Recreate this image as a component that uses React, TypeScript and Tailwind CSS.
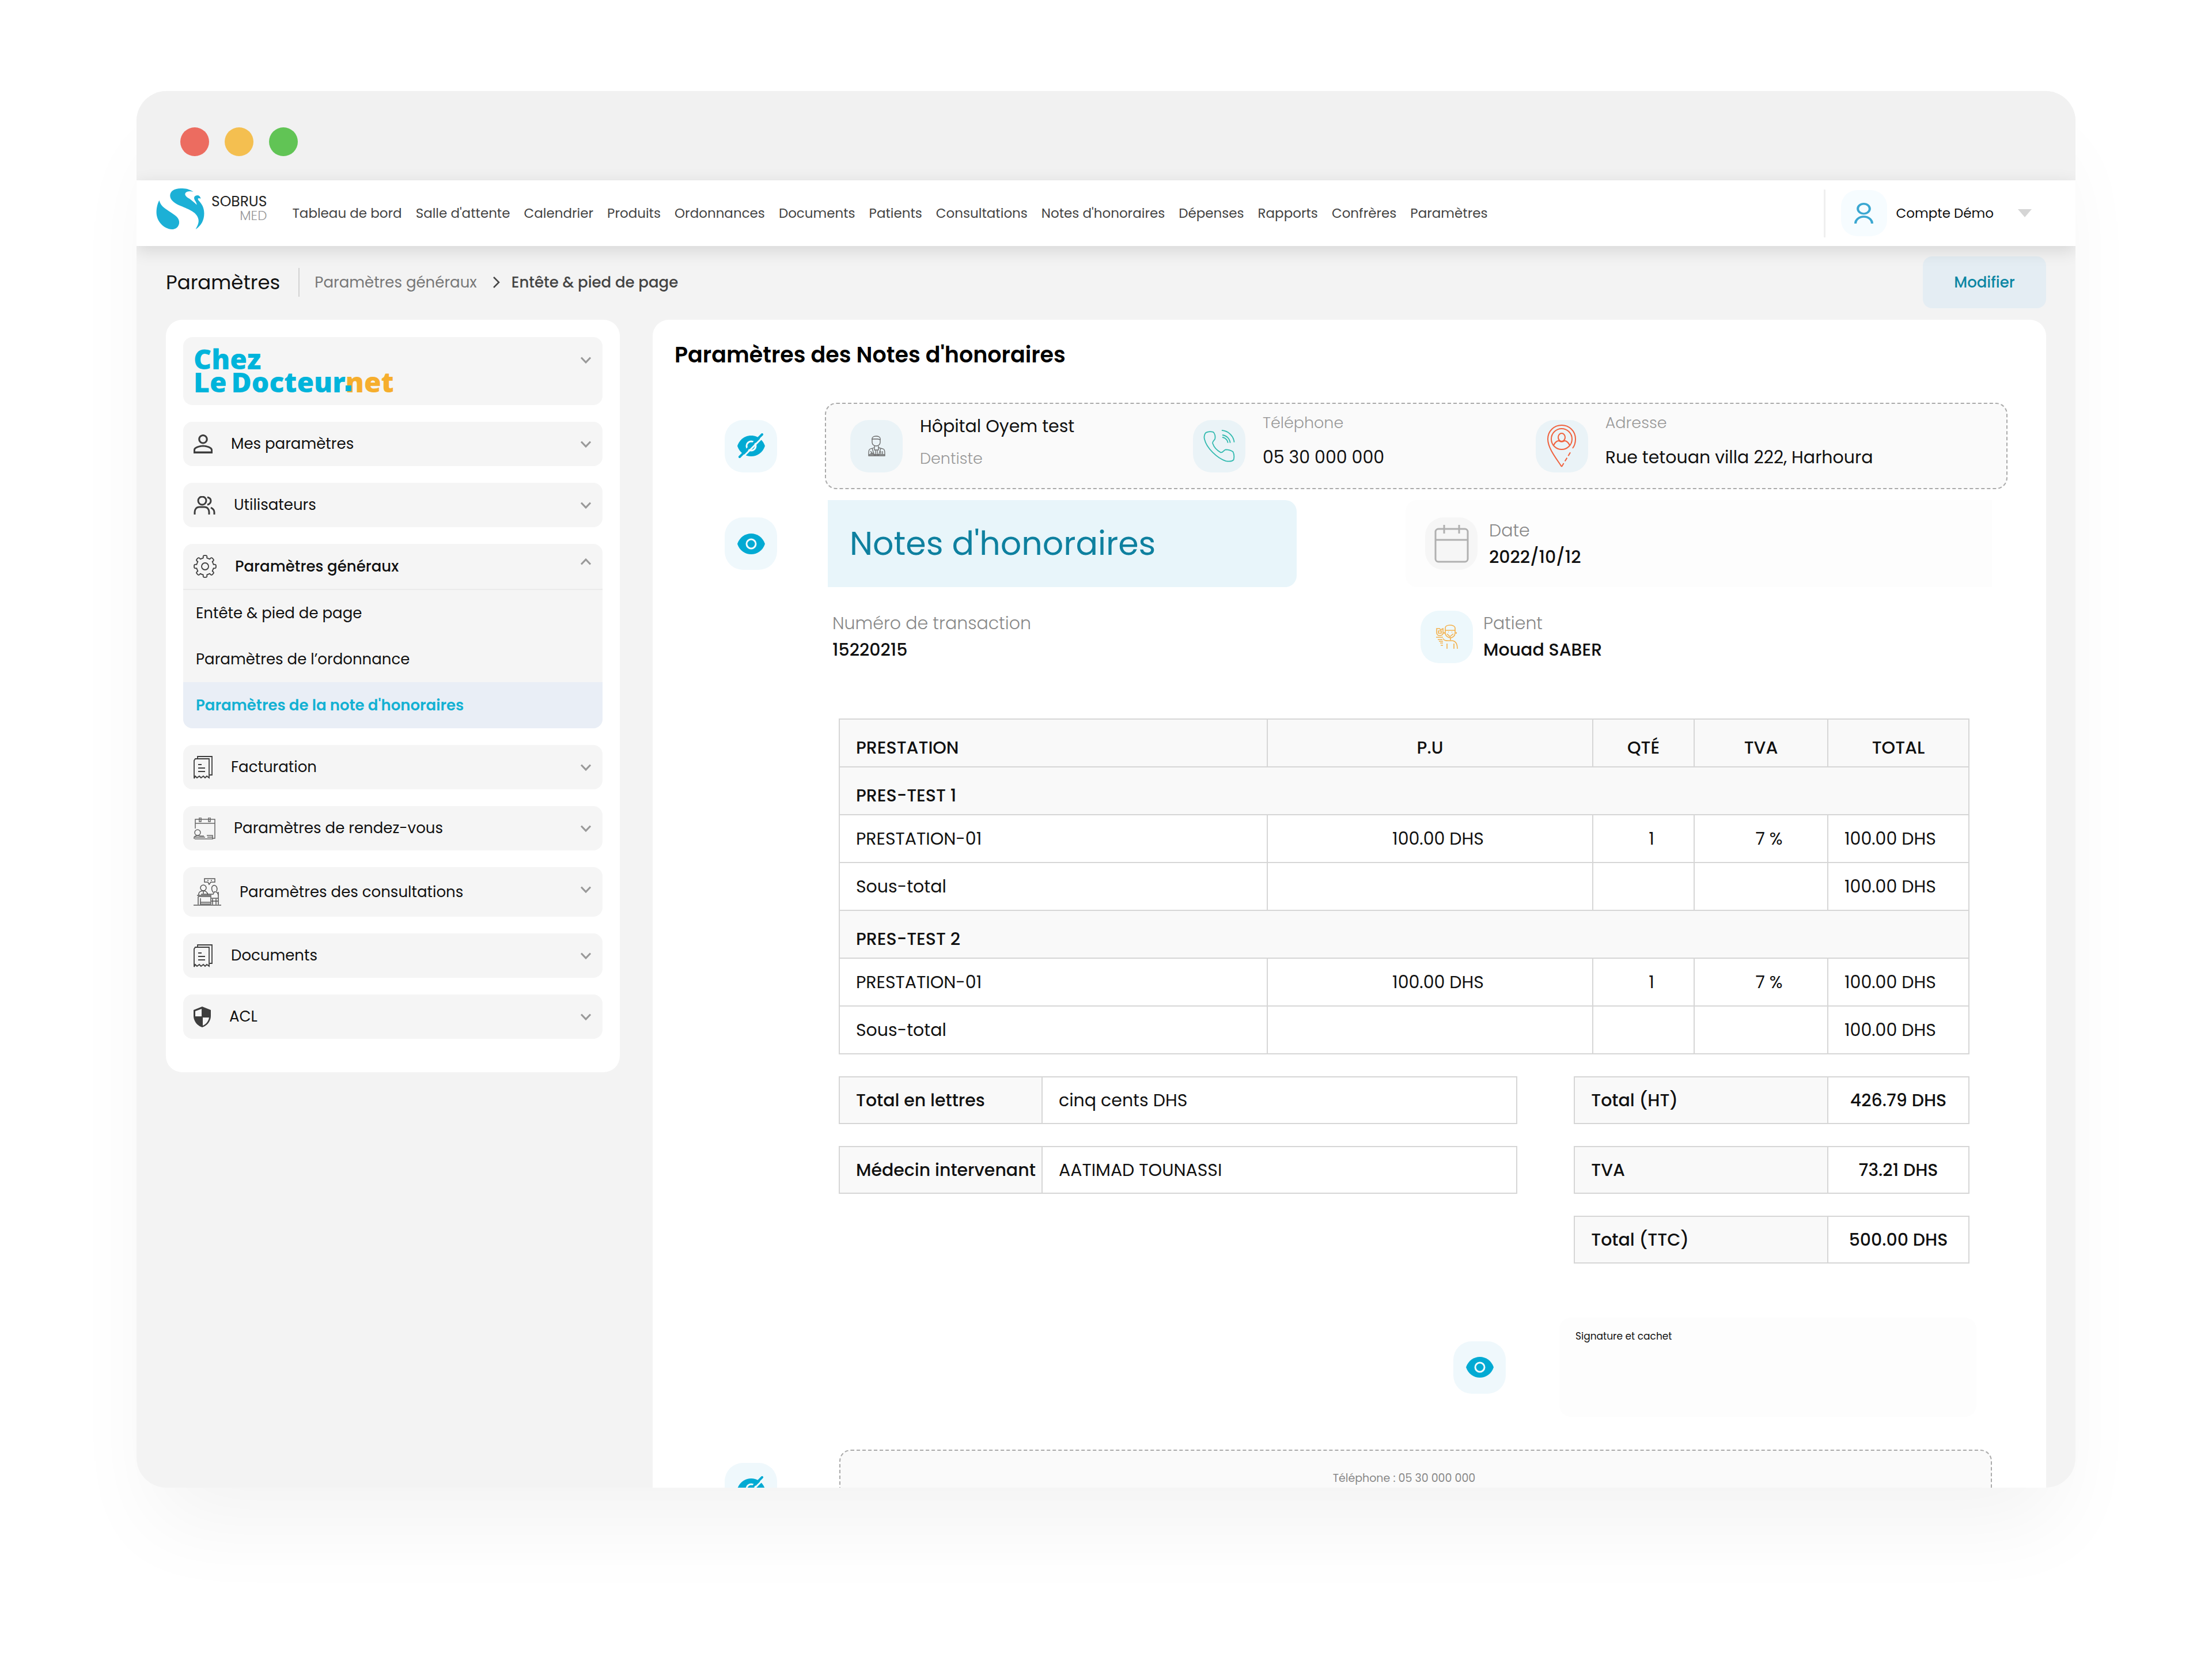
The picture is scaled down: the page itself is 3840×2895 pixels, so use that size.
import { ReactNode } from 'react';

const NAV_LINKS = [
  'Tableau de bord',
  "Salle d'attente",
  'Calendrier',
  'Produits',
  'Ordonnances',
  'Documents',
  'Patients',
  'Consultations',
  "Notes d'honoraires",
  'Dépenses',
  'Rapports',
  'Confrères',
  'Paramètres',
];

const GROUPS = [
  { name: 'PRES-TEST 1', line: 'PRESTATION-01', price: '100.00 DHS', qty: '1', vat: '7 %', total: '100.00 DHS' },
  { name: 'PRES-TEST 2', line: 'PRESTATION-01', price: '100.00 DHS', qty: '1', vat: '7 %', total: '100.00 DHS' },
];

const DETAILS = [
  { label: 'Total en lettres', value: 'cinq cents DHS' },
  { label: 'Médecin intervenant', value: 'AATIMAD TOUNASSI' },
];

const TOTALS = [
  { label: 'Total (HT)', value: '426.79 DHS' },
  { label: 'TVA', value: '73.21 DHS' },
  { label: 'Total (TTC)', value: '500.00 DHS' },
];

/* ---------- Icons ---------- */

function SwanLogo() {
  return (
    <svg className="h-[71px] w-[84px] shrink-0" viewBox="0 0 84 72" fill="#1cb0d6" aria-hidden="true">
      <path d="M65 6C58 1 51 0 43 0C31 0 24 5 24 13C24 21 33 27 43 31C57 37 72 42 74 55C75 61 72 66 69 72C79 65 84 56 84 44C84 34 80 27 74 21C72 18 73 16 78 18C77 13 73 11 69 13C65 15 66 19 69 23C70 25 71 27 71 29C66 24 62 21 58 18C53 15 49 12 51 8C53 5 59 4 65 6Z" />
      <path d="M5 21C7 30 13 34 22 40C33 47 41 52 40 61C39 68 34 72 27 72C13 71 0 58 0 42C0 34 2 26 5 21Z" />
    </svg>
  );
}

function Chevron({ up = false }: { up?: boolean }) {
  return (
    <svg
      className={up ? 'h-3 w-[18px] rotate-180' : 'h-3 w-[18px]'}
      viewBox="0 0 18 12"
      fill="none"
      stroke="#999"
      strokeWidth="3"
      aria-hidden="true"
    >
      <path d="M1 1.5 9 10 17 1.5" />
    </svg>
  );
}

function ProfileIcon() {
  return (
    <svg className="h-[33px] w-[33px]" viewBox="4 4 16 16" fill="#3d3d3d" aria-hidden="true">
      <path d="M12 5.5A2.5 2.5 0 1 1 12 10.500A2.500 2.500 0 0 1 12 5.500M12 14.400C15 14.400 18.500 15.600 18.600 17.200V18.300H5.400V17.200C5.500 15.600 9 14.400 12 14.400M12 4C9.800 4 8 5.800 8 8s1.800 4 4 4 4-1.800 4-4-1.800-4-4-4zm0 9c-2.700 0-8 1.300-8 4v3h16v-3c0-2.700-5.300-4-8-4z" fillRule="evenodd" />
    </svg>
  );
}

function UsersIcon() {
  return (
    <svg className="h-8 w-[38px]" viewBox="0 0 38 32" fill="none" stroke="#3d3d3d" strokeWidth="3" aria-hidden="true">
      <ellipse cx="15" cy="8" rx="7" ry="7" />
      <path d="M2 32v-4c0-5 3-9 8-9h9c5 0 8 4 8 9v4" />
      <path d="M24 2c4 1 6 3 6 6s-2 6-6 7M30 20c4 2 6 5 6 8v4" />
    </svg>
  );
}

const point = (radius: number, degrees: number) => {
  const angle = (degrees * Math.PI) / 180;
  return `${20 + radius * Math.cos(angle)} ${20 + radius * Math.sin(angle)}`;
};

const GEAR_PATH = [0, 45, 90, 135, 180, 225, 270, 315]
  .map(
    (a, i) =>
      `${i === 0 ? 'M' : 'L'}${point(15, a - 12)} Q${point(19, a - 12)} ${point(19, a - 5)} L${point(19, a + 5)} Q${point(19, a + 12)} ${point(15, a + 12)} Q${point(15, a + 22)} ${point(15, a + 33)}`,
  )
  .join(' ');

function GearIcon() {
  return (
    <svg className="h-10 w-10" viewBox="0 0 40 40" fill="none" stroke="#3d3d3d" strokeWidth="1.800" strokeLinejoin="round" aria-hidden="true">
      <path d={`${GEAR_PATH}Z`} />
      <circle cx="20" cy="20" r="6" />
    </svg>
  );
}

function ReceiptIcon() {
  return (
    <svg className="h-10 w-[33px]" viewBox="0 0 33 40" fill="none" stroke="#3d3d3d" strokeWidth="1.800" aria-hidden="true">
      <path d="M7 5V1h25v32h-4" />
      <path d="M1 39V8l2-3h24v33l-4-3-3 3-3-3-4 3-3-3-4 3-3-3Z" />
      <path d="M8 15h6M8 21h12M8 27h12" />
    </svg>
  );
}

function AppointmentIcon() {
  return (
    <svg className="h-[38px] w-[38px]" viewBox="0 0 38 38" fill="none" stroke="#666" strokeWidth="1.500" aria-hidden="true">
      <path d="M3 19V3h34v33h-4M3 10h34M10 0v7h3V0zM26 0v7h3V0z" />
      <circle cx="7" cy="26" r="5" />
      <path d="M1 37v-3q3-4 11-2h6M23 31h10v6M2 37h32M2 34h18M24 34h9" />
    </svg>
  );
}

function ConsultationIcon() {
  return (
    <svg className="h-12 w-12" viewBox="0 0 48 48" fill="none" stroke="#555" strokeWidth="1.500" aria-hidden="true">
      <path d="M19 1h18v6h-7l-3 4-2-4h-6ZM24 4h2M30 4h2" />
      <path d="M0 47h48M8 32h22v14M8 32v14M12 35v11M12 42h17M12 45h17M6 30h25" />
      <circle cx="17" cy="17" r="5" />
      <path d="M9 30c-1-6 4-8 8-8s7 3 8 7M17 22v5M13 28h14" />
      <path d="M32 21c-2-8 4-10 7-7s2 6 1 9M32 21l2 4M27 28h7l2-4c4-1 7 2 7 7v4H31M43 24v22M33 36v10M39 36v10M31 40h12" />
    </svg>
  );
}

function ShieldIcon() {
  return (
    <svg className="h-9 w-[30px]" viewBox="0 0 30 36" fill="#3d3d3d" aria-hidden="true">
      <path d="M15 0 30 6v10c0 9-6 17-15 20C6 33 0 25 0 16V6Z" />
      <path d="M14 4v13H3V8ZM16 19h11c-1 6-5 12-11 14Z" fill="#f5f5f5" />
    </svg>
  );
}

function EyeIcon({ off = false }: { off?: boolean }) {
  return (
    <svg className="h-11 w-12" viewBox="0 0 48 44" fill="none" aria-hidden="true">
      <path d="M0 22C4 10 14 4 24 4s20 6 24 18C44 34 34 40 24 40S4 34 0 22Z" fill="#02aad3" />
      <circle cx="24" cy="22" r="8" stroke="#f1fafc" strokeWidth="3" />
      {off && (
        <>
          <path d="M8 43 47 4" stroke="#f1fafc" strokeWidth="3" />
          <path d="M4 41 43 2" stroke="#02aad3" strokeWidth="4" strokeLinecap="round" />
        </>
      )}
    </svg>
  );
}

function DoctorIcon() {
  return (
    <svg className="h-9 w-[30px]" viewBox="0 0 30 36" fill="none" stroke="#666" strokeWidth="1.300" aria-hidden="true">
      <path d="M7 8C6 3 9 1 14 1s8 2 7 7M8 6h9l4 1v5c0 4-4 6-7 6s-7-2-7-6V6Z" />
      <path d="M11 18v7h7v-7M11 21l-7 2c-3 1-3 4-3 12h28c0-8 0-11-3-12l-8-2M7 22l4 13M22 22l-4 13M13 26v9M16 26v9M4 27l3 3M4 31h5M22 27v5M25 27v5M1 33h28" />
    </svg>
  );
}

function PhoneIcon() {
  return (
    <svg className="h-14 w-[55px]" viewBox="0 0 55 57" fill="none" stroke="#2fb9ae" strokeWidth="1.800" aria-hidden="true">
      <path d="M4 5c4-2 9-2 13-1 3 2 4 8 3 12-1 3-5 4-4 8 2 6 7 12 14 16 4 1 5-4 9-5 5 0 9 1 13 4 2 4 2 10 1 14-3 3-9 3-14 2C26 51 4 33 1 14c0-4 1-7 3-9Z" />
      <path d="M32 1c12 1 21 10 22 21M33 9c7 1 13 6 14 14M33 13c5 1 9 5 10 10" />
    </svg>
  );
}

function PinIcon() {
  return (
    <svg className="h-[74px] w-[50px]" viewBox="0 0 50 74" fill="none" stroke="#f0623e" strokeWidth="2" aria-hidden="true">
      <path d="M44 41c4-5 5-10 5-16C49 11 38 1 25 1S1 11 1 25c0 16 15 34 24 48" />
      <path d="m25 73 17-28" strokeDasharray="7 4" />
      <circle cx="25" cy="25" r="18" />
      <ellipse cx="25" cy="22" rx="6" ry="7" />
      <path d="M11 36c2-5 6-8 9-8 3 2 7 2 10 0 3 0 7 3 9 8" />
    </svg>
  );
}

function CalendarIcon() {
  return (
    <svg className="h-[66px] w-[60px]" viewBox="0 0 60 66" fill="none" stroke="#b0b0b0" strokeWidth="3" aria-hidden="true">
      <rect x="2" y="7" width="56" height="57" rx="5" />
      <path d="M2 26h56M17 0v15M43 0v15" />
    </svg>
  );
}

function PatientIcon() {
  return (
    <svg className="h-[42px] w-[38px]" viewBox="0 0 38 42" fill="none" stroke="#f4b04a" strokeWidth="1.600" aria-hidden="true">
      <path d="M16 11V6c0-3 3-5 8-5s9 2 9 5v5M16 10h17v5c0 5-5 8-8 8s-9-3-9-8v-5ZM14 13v3M35 13v3M19 16l5 5 6-5M21 13h1M27 13h1M25 22v5" />
      <path d="M12 24c2 4 5 4 9 4h8c5 1 8 5 8 14M19 33v9M31 33v9" />
      <path d="M1 7h5l2 2 4-2v8c0 3-3 4-6 4s-5-2-5-5V7ZM4 11h5v4H4ZM0 22h12M3 26h8M5 29h7M7 32h5M8 36h4" />
    </svg>
  );
}

/* ---------- Sidebar ---------- */

interface SidebarItemProps {
  icon: ReactNode;
  label: string;
  tall?: boolean;
}

function SidebarItem({ icon, label, tall = false }: SidebarItemProps) {
  return (
    <button
      type="button"
      className={`flex w-full items-start justify-between rounded-2xl bg-[#f5f5f5] pl-[18px] pr-5 text-left ${
        tall ? 'h-[86px]' : 'h-[77px]'
      }`}
    >
      <span className="flex h-full items-center gap-8">
        {icon}
        {label}
      </span>
      <span className="flex h-[77px] items-center">
        <Chevron />
      </span>
    </button>
  );
}

function Sidebar() {
  return (
    <aside className="flex w-[788px] shrink-0 flex-col gap-[29px] rounded-[28px] bg-white px-[30px] pb-[58px] pt-[30px] text-[26px] text-[#111]">
      <button
        type="button"
        aria-label="Chez LeDocteur.net"
        className="flex h-[118px] w-full items-start justify-between rounded-2xl bg-[#f5f5f5] pl-[18px] pr-5"
      >
        <span className="pt-[18px] text-left font-['Open_Sans',sans-serif] text-[48px] font-extrabold leading-10 text-[#00b4db]">
          <span className="block">Chez</span>
          <span className="flex">
            <span>Le</span>
            <span className="ml-2">Docteur</span>
            <span className="relative text-[#f6ae2d]">
              net
              <span className="absolute bottom-1 left-0 h-2.5 w-2.5 bg-[#00b4db]" />
            </span>
          </span>
        </span>
        <span className="flex h-20 items-center">
          <Chevron />
        </span>
      </button>

      <SidebarItem icon={<ProfileIcon />} label="Mes paramètres" />
      <SidebarItem icon={<UsersIcon />} label="Utilisateurs" />

      {/* Open section */}
      <div className="overflow-hidden rounded-2xl bg-[#f5f5f5]">
        <button
          type="button"
          aria-expanded="true"
          className="flex h-20 w-full items-start justify-between border-b-2 border-[#ebebeb] pl-[18px] pr-5 font-medium"
        >
          <span className="flex h-full items-center gap-8">
            <GearIcon />
            Paramètres généraux
          </span>
          <span className="flex h-[62px] items-center">
            <Chevron up />
          </span>
        </button>
        <a href="#entete" className="flex h-20 items-center px-[22px]">
          Entête &amp; pied de page
        </a>
        <a href="#ordonnance" className="flex h-20 items-center px-[22px]">
          Paramètres de l’ordonnance
        </a>
        <a href="#note" className="flex h-20 items-center bg-[#e9eef6] px-[22px] font-semibold text-[#14b1d3]">
          Paramètres de la note d'honoraires
        </a>
      </div>

      <SidebarItem icon={<ReceiptIcon />} label="Facturation" />
      <SidebarItem icon={<AppointmentIcon />} label="Paramètres de rendez-vous" />
      <SidebarItem icon={<ConsultationIcon />} label="Paramètres des consultations" tall />
      <SidebarItem icon={<ReceiptIcon />} label="Documents" />
      <SidebarItem icon={<ShieldIcon />} label="ACL" />
    </aside>
  );
}

/* ---------- Note d'honoraires ---------- */

function VisibilityButton({ off = false, label }: { off?: boolean; label: string }) {
  return (
    <button
      type="button"
      aria-label={label}
      className="flex h-[91px] w-[91px] shrink-0 items-center justify-center rounded-[32px] bg-[#eff8fc]"
    >
      <EyeIcon off={off} />
    </button>
  );
}

function IconTile({ className, children }: { className: string; children: ReactNode }) {
  return (
    <span className={`flex h-[91px] w-[91px] shrink-0 items-center justify-center rounded-[32px] ${className}`}>
      {children}
    </span>
  );
}

function PracticeHeader() {
  return (
    <div className="flex items-center pl-[125px] pr-[67px]">
      <VisibilityButton off label="Afficher l'entête" />
      <div className="ml-[83px] grid h-[150px] flex-1 grid-cols-[594fr_594fr_816fr] items-center rounded-[20px] border-2 border-dashed border-[#aaa] bg-[#fafafa] pl-[42px] text-[30px]">
        <div className="flex items-center gap-[30px]">
          <IconTile className="bg-[#eaf3f7]">
            <DoctorIcon />
          </IconTile>
          <div className="space-y-4 pb-3 leading-10">
            <p>Hôpital Oyem test</p>
            <p className="text-[27px] font-light text-[#999]">Dentiste</p>
          </div>
        </div>
        <div className="flex items-center gap-[30px]">
          <IconTile className="bg-[#eaf3f7]">
            <PhoneIcon />
          </IconTile>
          <div className="space-y-5 pb-5 leading-10">
            <p className="text-[27px] font-light text-[#999]">Téléphone</p>
            <p>05 30 000 000</p>
          </div>
        </div>
        <div className="flex items-center gap-[30px]">
          <IconTile className="bg-[#eaf3f7]">
            <PinIcon />
          </IconTile>
          <div className="space-y-5 pb-5 leading-10">
            <p className="text-[27px] font-light text-[#999]">Adresse</p>
            <p>Rue tetouan villa 222, Harhoura</p>
          </div>
        </div>
      </div>
    </div>
  );
}

function NoteSummary() {
  return (
    <>
      <div className="mt-[19px] flex items-center pl-[125px] pr-[94px]">
        <VisibilityButton label="Masquer le titre" />
        <div className="ml-[88px] grid flex-1 grid-cols-[814fr_189fr_1018fr]">
          <div className="flex h-[151px] items-center rounded-r-[20px] bg-[#e8f5fa] pl-[38px] text-[57px] text-[#0e809f]">
            Notes d'honoraires
          </div>
          <div />
          <div className="flex items-center gap-5 rounded-l-[20px] bg-[#fdfdfd] pl-[34px] text-[30px]">
            <IconTile className="bg-[#f6f6f6]">
              <CalendarIcon />
            </IconTile>
            <div className="leading-[46px]">
              <p className="font-light text-[#888]">Date</p>
              <p className="font-medium">2022/10/12</p>
            </div>
          </div>
        </div>
      </div>

      <div className="mt-10 grid grid-cols-[1020fr_991fr] pl-[312px] pr-[94px] text-[30px]">
        <div className="leading-[46px]">
          <p className="font-light text-[#888]">Numéro de transaction</p>
          <p className="font-medium">15220215</p>
        </div>
        <div className="flex items-center gap-[18px]">
          <IconTile className="bg-[#edf8fc]">
            <PatientIcon />
          </IconTile>
          <div className="leading-[46px]">
            <p className="font-light text-[#888]">Patient</p>
            <p className="font-medium">Mouad SABER</p>
          </div>
        </div>
      </div>
    </>
  );
}

function FeeTable() {
  const cell = 'h-[83px] border-2 border-[#d6d6d6]';

  return (
    <table className="w-full table-fixed border-collapse text-[30px]">
      <colgroup>
        <col className="w-[743px]" />
        <col className="w-[565px]" />
        <col className="w-[176px]" />
        <col className="w-[232px]" />
        <col className="w-[245px]" />
      </colgroup>
      <thead>
        <tr className="bg-[#f9f9f9]">
          <th className={`${cell} pl-7 pt-4 text-left font-medium`}>PRESTATION</th>
          <th className={`${cell} pt-4 font-medium`}>P.U</th>
          <th className={`${cell} pt-4 font-medium`}>QTÉ</th>
          <th className={`${cell} pt-4 font-medium`}>TVA</th>
          <th className={`${cell} pt-4 font-medium`}>TOTAL</th>
        </tr>
      </thead>
      {GROUPS.map((group) => (
        <tbody key={group.name}>
          <tr className="bg-[#f9f9f9]">
            <th colSpan={5} className={`${cell} pl-7 pt-4 text-left font-medium`}>
              {group.name}
            </th>
          </tr>
          <tr>
            <td className={`${cell} pl-7`}>{group.line}</td>
            <td className={`${cell} pl-7 text-center`}>{group.price}</td>
            <td className={`${cell} pl-7 text-center`}>{group.qty}</td>
            <td className={`${cell} pl-7 text-center`}>{group.vat}</td>
            <td className={`${cell} pl-7`}>{group.total}</td>
          </tr>
          <tr>
            <td className={`${cell} pl-7`}>Sous-total</td>
            <td className={cell} />
            <td className={cell} />
            <td className={cell} />
            <td className={`${cell} pl-7`}>{group.total}</td>
          </tr>
        </tbody>
      ))}
    </table>
  );
}

function Summary() {
  return (
    <div className="mt-[38px] grid grid-cols-[1177fr_686fr] items-start gap-x-[98px] text-[30px]">
      <dl className="space-y-[38px]">
        {DETAILS.map((row) => (
          <div key={row.label} className="flex h-[83px] border-2 border-[#d6d6d6]">
            <dt className="flex w-[352px] shrink-0 items-center whitespace-nowrap border-r-2 border-[#d6d6d6] bg-[#f9f9f9] pl-7 font-medium">
              {row.label}
            </dt>
            <dd className="flex items-center pl-7">{row.value}</dd>
          </div>
        ))}
      </dl>
      <dl className="space-y-[38px] font-medium">
        {TOTALS.map((row) => (
          <div key={row.label} className="flex h-[83px] border-2 border-[#d6d6d6]">
            <dt className="flex flex-1 items-center bg-[#f9f9f9] pl-7">{row.label}</dt>
            <dd className="flex w-[245px] items-center justify-center border-l-2 border-[#d6d6d6]">{row.value}</dd>
          </div>
        ))}
      </dl>
    </div>
  );
}

export default function App() {
  return (
    <div className="h-screen bg-white px-[237px] pb-[313px] pt-[158px] font-['Poppins','Inter',sans-serif] text-[#111]">
      <div className="flex h-full flex-col overflow-hidden rounded-[52px] bg-[#f3f3f3] shadow-[0_90px_150px_-30px_rgba(0,0,0,0.05)]">
        {/* Window controls */}
        <div className="flex h-[155px] shrink-0 gap-[27px] bg-[#f1f1f1] pl-[76px] pt-[63px]">
          <span className="h-[50px] w-[50px] rounded-full bg-[#ec6c60]" />
          <span className="h-[50px] w-[50px] rounded-full bg-[#f4bf50]" />
          <span className="h-[50px] w-[50px] rounded-full bg-[#61c455]" />
        </div>

        <header className="relative z-10 flex h-[114px] shrink-0 items-center bg-white pl-[34px] pr-[76px] shadow-[0_8px_28px_rgba(0,0,0,0.12)]">
          <a href="#accueil" className="flex items-center gap-3 pb-4">
            <SwanLogo />
            <span className="flex flex-col items-end text-[25px] leading-6 text-[#222]">
              <span>SOBRUS</span>
              <span className="text-[23px] font-light text-[#999]">MED</span>
            </span>
          </a>
          <nav className="ml-11 flex gap-6 whitespace-nowrap text-[23px] text-[#444]">
            {NAV_LINKS.map((link) => (
              <a key={link} href="#menu">
                {link}
              </a>
            ))}
          </nav>
          <div className="ml-auto flex items-center">
            <span className="h-[83px] w-[3px] bg-[#efefef]" />
            <span className="ml-[27px] flex h-20 w-20 items-center justify-center rounded-[28px] bg-[#f6fcff]">
              <svg className="h-[36px] w-[33px]" viewBox="4 1 16 21" preserveAspectRatio="none" fill="#3ba7d1" aria-hidden="true">
                <path d="M4 22a8 8 0 1 1 16 0h-2a6 6 0 0 0-12 0H4Zm8-9c-3.315 0-6-2.685-6-6s2.685-6 6-6 6 2.685 6 6-2.685 6-6 6Zm0-2c2.210 0 4-1.790 4-4s-1.790-4-4-4-4 1.790-4 4 1.790 4 4 4Z" />
              </svg>
            </span>
            <button type="button" className="ml-4 flex items-center gap-[42px] text-[23px]">
              Compte Démo
              <svg className="h-3.5 w-6" viewBox="0 0 24 14" fill="#d5d5d5" aria-hidden="true">
                <path d="M0 0h24L12 14Z" />
              </svg>
            </button>
          </div>
        </header>

        <div className="flex shrink-0 items-center px-[51px] pb-5 pt-[18px]">
          <h1 className="text-[34px]">Paramètres</h1>
          <span className="ml-8 h-[50px] w-0.5 bg-[#d2d2d2]" />
          <nav className="ml-[26px] flex items-center text-[26px]">
            <a href="#generaux" className="text-[#777]">
              Paramètres généraux
            </a>
            <svg className="ml-7 mr-5 h-5 w-3" viewBox="0 0 12 20" fill="none" stroke="#444" strokeWidth="2.500" aria-hidden="true">
              <path d="m1 1 9 9-9 9" />
            </svg>
            <span className="font-medium text-[#444]">Entête &amp; pied de page</span>
          </nav>
          <button
            type="button"
            className="ml-auto h-[90px] w-[214px] rounded-2xl bg-[#e4edf3] text-[26px] font-medium text-[#0c86a3]"
          >
            Modifier
          </button>
        </div>

        <div className="flex min-h-0 flex-1 items-start gap-[57px] px-[51px]">
          <Sidebar />
          <main className="min-w-0 flex-1 rounded-t-[28px] bg-white">
            <h2 className="pb-[59px] pl-[38px] pt-9 text-[38px] font-semibold leading-[49px] text-black">
              Paramètres des Notes d'honoraires
            </h2>
            <PracticeHeader />
            <NoteSummary />

            <div className="mt-24 pl-[323px] pr-[133px]">
              <FeeTable />
              <Summary />
            </div>

            <div className="mt-[94px] flex items-center justify-end gap-[93px] pr-[121px]">
              <VisibilityButton label="Masquer la signature" />
              <div className="h-[172px] w-[724px] rounded-[20px] bg-[#fdfdfd] px-7 pt-5 text-[17px]">
                Signature et cachet
              </div>
            </div>

            {/* Footer preview */}
            <div className="mt-[57px] flex items-center pl-[125px] pr-[94px]">
              <VisibilityButton off label="Afficher le pied de page" />
              <div className="ml-[108px] h-[136px] flex-1 rounded-[20px] border-2 border-dashed border-[#aaa] bg-[#fafafa] pr-10 pt-[34px] text-center text-[19px] text-[#888]">
                Téléphone : 05 30 000 000
              </div>
            </div>
          </main>
        </div>
      </div>
    </div>
  );
}
